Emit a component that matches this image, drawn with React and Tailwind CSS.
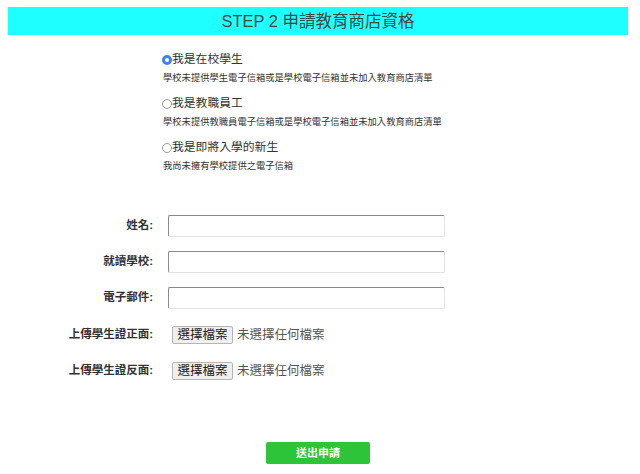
import { useState } from "react";

const options = [
  { id: "student", title: "我是在校學生", desc: "學校未提供學生電子信箱或是學校電子信箱並未加入教育商店清單" },
  { id: "staff", title: "我是教職員工", desc: "學校未提供教職員電子信箱或是學校電子信箱並未加入教育商店清單" },
  { id: "freshman", title: "我是即將入學的新生", desc: "我尚未擁有學校提供之電子信箱" },
];

const fields = ["姓名:", "就讀學校:", "電子郵件:"];
const uploads = ["上傳學生證正面:", "上傳學生證反面:"];

function Radio({ checked }) {
  if (checked) {
    return (
      <span className="w-[10px] h-[10px] rounded-full bg-[#3b82f6] flex items-center justify-center">
        <span className="w-[4px] h-[4px] rounded-full bg-white" />
      </span>
    );
  }
  return <span className="w-[10px] h-[10px] rounded-full border border-[#9a9a9a] bg-white" />;
}

export default function App() {
  const [role, setRole] = useState("student");

  return (
    <div className="w-[640px] h-[474px] bg-white pt-[7px] font-['Liberation_Sans','Noto_Sans_CJK_TC',sans-serif] text-[#333]">
      <div className="ml-2 w-[620px] h-[28px] bg-[#1effff] flex items-center justify-center text-[16.5px] text-[#444]">
        STEP 2 申請教育商店資格
      </div>

      <div className="ml-[162px] mt-[15px] flex flex-col">
        {options.map((o) => (
          <div key={o.id} className="mb-[6px]" onClick={() => setRole(o.id)}>
            <div className="h-[20px] flex items-center text-[11.8px]">
              <Radio checked={role === o.id} />
              <span>{o.title}</span>
            </div>
            <div className="h-[18px] flex items-center text-[9.3px] pl-[1px]">{o.desc}</div>
          </div>
        ))}
      </div>

      <div className="mt-[33px] flex flex-col gap-[14px]">
        {fields.map((f) => (
          <div key={f} className="flex items-center h-[22px]">
            <label className="w-[153px] text-right text-[11.5px] font-semibold">{f}</label>
            <input
              type="text"
              className="ml-[15px] w-[277px] h-[22px] rounded-[2px] border border-t-[#8a8a8a] border-l-[#8a8a8a] border-r-[#e2e2e2] border-b-[#e2e2e2] outline-none"
            />
          </div>
        ))}
        <div className="mt-[1px] flex flex-col gap-[14px]">
          {uploads.map((u) => (
            <div key={u} className="flex items-center h-[22px]">
              <label className="w-[153px] text-right text-[11.5px] font-semibold">{u}</label>
              <span className="ml-[19px] h-[18px] w-[61px] flex items-center justify-center bg-[#efefef] border border-[#b5b5b5] rounded-[2px] text-[12.5px] text-[#222]">
                選擇檔案
              </span>
              <span className="ml-[4px] text-[12.5px] text-[#555]">未選擇任何檔案</span>
            </div>
          ))}
        </div>
      </div>

      <div className="mt-[60px] flex justify-center">
        <button className="ml-[-4px] w-[104px] h-[22px] rounded-[2px] bg-[#2ec43a] text-white text-[11px] font-bold">
          送出申請
        </button>
      </div>
    </div>
  );
}
